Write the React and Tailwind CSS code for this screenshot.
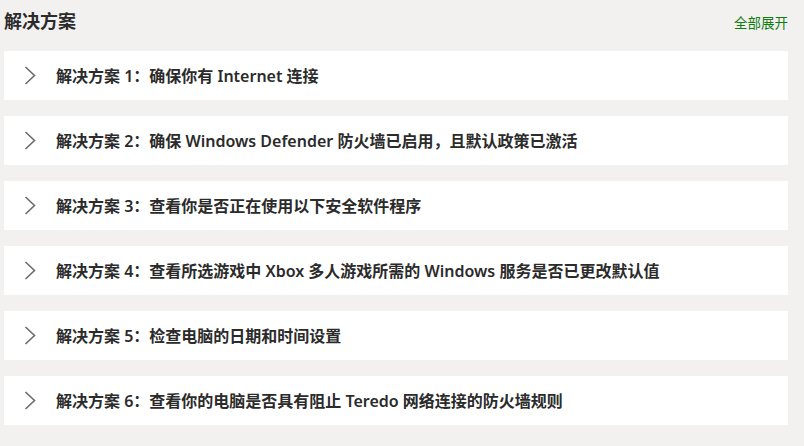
import React from 'react';

const items = [
  '解决方案 1：确保你有 Internet 连接',
  '解决方案 2：确保 Windows Defender 防火墙已启用，且默认政策已激活',
  '解决方案 3：查看你是否正在使用以下安全软件程序',
  '解决方案 4：查看所选游戏中 Xbox 多人游戏所需的 Windows 服务是否已更改默认值',
  '解决方案 5：检查电脑的日期和时间设置',
  '解决方案 6：查看你的电脑是否具有阻止 Teredo 网络连接的防火墙规则',
];

function Chevron() {
  return (
    <svg width="12" height="19" viewBox="0 0 12 19" className="shrink-0">
      <path d="M1.5 1 L10.5 9.5 L1.5 18" fill="none" stroke="#6b6b6b" strokeWidth="1.6" />
    </svg>
  );
}

export default function App() {
  return (
    <div
      className="w-[804px] h-[446px] bg-[#f2f1f0] text-[#2b2b2b] overflow-hidden"
      style={{ fontFamily: '"Segoe UI", "Noto Sans", "Noto Sans CJK SC", sans-serif' }}
    >
      <div className="w-[784px] ml-[4px]">
        <div className="flex items-end justify-between h-[36px] pb-[2px]">
          <h2 className="text-[18px] font-bold leading-[26px]">解决方案</h2>
          <button className="text-[13.5px] text-[#107c10] leading-[20px] mb-[1px]">全部展开</button>
        </div>
        <div className="mt-[15px] flex flex-col gap-[16px]">
          {items.map((t) => (
            <div key={t} className="bg-white h-[49px] flex items-center pl-[20px]">
              <Chevron />
              <span className="ml-[20px] text-[16px] font-semibold leading-[22px]">{t}</span>
            </div>
          ))}
        </div>
      </div>
    </div>
  );
}
